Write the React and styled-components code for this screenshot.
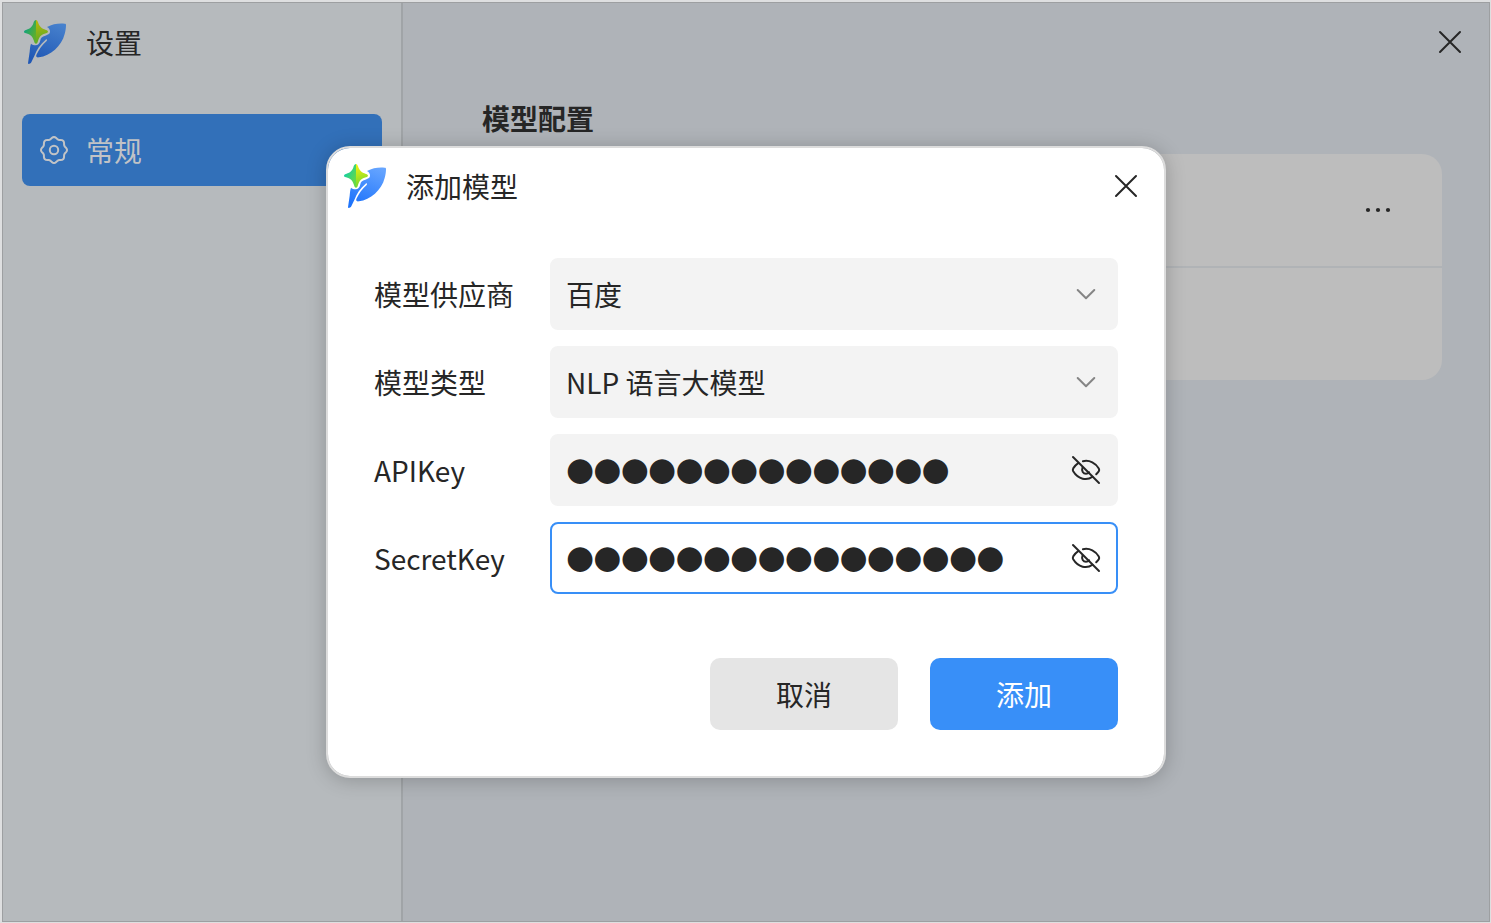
import React from "react";
import styled, { createGlobalStyle } from "styled-components";

const GlobalStyle = createGlobalStyle`
  *, *::before, *::after { box-sizing: border-box; }
  body { margin: 0; background: #dedfe0; overflow: hidden; }
  body, button {
    font-family: "Noto Sans CJK SC", "Noto Sans", sans-serif;
    font-size: 28px;
    line-height: 40px;
    color: #262626;
  }
`;

const Page = styled.div`
  width: 1491px;
  height: 923px;
  padding: 2px 1px 1px 2px;
`;

const Window = styled.div`
  display: flex;
  height: 920px;
  border: 1px solid #9d9fa1;
  background: #afb3b8;
`;

const Sidebar = styled.aside`
  flex: none;
  width: 400px;
  padding: 0 19px;
  border-right: 2px solid #a0a4a7;
  background: #b6babd;
`;

const Brand = styled.div`
  display: flex;
  align-items: center;
  gap: 20px;
  height: 79px;
  padding-left: 2px;
`;

const BrandName = styled.span`
  padding-bottom: 1px;
`;

const NavItem = styled.div`
  display: flex;
  align-items: center;
  gap: 18px;
  height: 72px;
  margin-top: 32px;
  padding-left: 18px;
  border-radius: 8px;
  background: #3270b9;
  color: #c1c3c6;
`;

const Content = styled.main`
  flex: 1;
  display: flex;
  flex-direction: column;
  padding: 0 47px 0 79px;
`;

const ContentBar = styled.div`
  display: flex;
  justify-content: flex-end;
  margin: 0 -20px;
  padding-top: 27px;
`;

const SectionTitle = styled.h2`
  margin: 44px 0 0;
  font-size: 28px;
  line-height: 40px;
  font-weight: 700;
`;

const Card = styled.section`
  margin-top: 16px;
  border-radius: 20px;
  background: #bdbdbd;
`;

const CardRow = styled.div`
  display: flex;
  align-items: center;
  justify-content: flex-end;
  height: ${(p) => (p.$divided ? 114 : 112)}px;
  padding-right: 51px;
  border-bottom: ${(p) => (p.$divided ? "2px solid #b0b3b6" : "none")};
`;

const IconButton = styled.button`
  display: flex;
  padding: 0;
  border: 0;
  background: none;
`;

const Dialog = styled.form`
  position: absolute;
  left: 326px;
  top: 146px;
  width: 840px;
  height: 632px;
  padding: 0 46px;
  border: 2px solid #dcdcdc;
  border-radius: 24px;
  background: #fff;
  background-clip: padding-box;
  box-shadow: 0 2px 20px rgba(0, 0, 0, 0.22);
`;

const DialogHeader = styled.header`
  display: flex;
  align-items: center;
  gap: 20px;
  height: 76px;
  margin: 0 -20px 0 -30px;
`;

const DialogTitle = styled.span`
  flex: 1;
`;

const Fields = styled.div`
  display: grid;
  gap: 16px;
  margin-top: 34px;
`;

const Field = styled.div`
  display: grid;
  grid-template-columns: 176px 568px;
  align-items: center;
`;

const Label = styled.label`
  display: block;
`;

const Control = styled.div`
  display: flex;
  align-items: center;
  justify-content: space-between;
  height: 72px;
  padding: 0 ${(p) => (p.$secret ? 15 : 19)}px 0 14px;
  border: 2px solid ${(p) => (p.$focused ? "#388ff7" : "#f3f3f3")};
  border-radius: 8px;
  background: ${(p) => (p.$focused ? "#fff" : "#f3f3f3")};
`;

const Mask = styled.span`
  padding-bottom: 2px;
  font-family: "DejaVu Sans", sans-serif;
  font-size: 32.3px;
  line-height: 40px;
  letter-spacing: -0.83px;
`;

const Actions = styled.footer`
  display: flex;
  justify-content: flex-end;
  gap: 32px;
  margin-top: 64px;
`;

const ActionButton = styled.button`
  width: 188px;
  height: 72px;
  padding: 0;
  border: 0;
  border-radius: 10px;
  background: ${(p) => (p.$primary ? "#388ff8" : "#e5e5e5")};
  color: ${(p) => (p.$primary ? "#fff" : "#262626")};
`;

function Logo({ id, dim }) {
  const c = dim
    ? ["#4781cd", "#2058b5", "#10a37e", "#5cae2e", "#b5b60a", "#66ad22"]
    : ["#66a5ff", "#1f74fb", "#16cfa5", "#62d94a", "#eef010", "#80dc2a"];
  return (
    <svg width="42" height="45" viewBox="72 72 126 135" fill="none">
      <defs>
        <linearGradient id={id + "leaf"} x1="170" y1="80" x2="120" y2="200" gradientUnits="userSpaceOnUse">
          <stop stopColor={c[0]} />
          <stop offset="1" stopColor={c[1]} />
        </linearGradient>
        <linearGradient id={id + "left"} x1="74" y1="100" x2="107" y2="115" gradientUnits="userSpaceOnUse">
          <stop stopColor={c[2]} />
          <stop offset="1" stopColor={c[3]} />
        </linearGradient>
        <linearGradient id={id + "right"} x1="112" y1="78" x2="125" y2="130" gradientUnits="userSpaceOnUse">
          <stop stopColor={c[4]} />
          <stop offset="1" stopColor={c[5]} />
        </linearGradient>
      </defs>
      <path fill={`url(#${id}leaf)`} d="M194 83C176 81 158 84 141 93C148 97 151 103 150 109C149 114 143 117 136 119C126 122 122 126 121 133C119 143 114 148 107 148C101 148 97 146 93 143C90 151 90 159 89 167L84 202C84 206 91 204 94 199L104 178C110 161 120 146 137 131C140 128 143 132 140 135C127 146 117 160 109 177C107 183 111 185 117 184C151 180 185 150 194 114C197 104 198 95 198 87C198 84 197 83 194 83Z" />
      <path fill={`url(#${id}left)`} d="M108 72C105 72 102 75 101 79C98 91 92 98 78 102C70 104 70 110 78 112C91 115 98 122 102 135C103 140 105 143 108 143Z" />
      <path fill={`url(#${id}right)`} d="M108 72C111 72 113 75 114 79C118 91 124 98 138 102C146 104 146 110 138 112C125 115 118 122 114 135C113 140 111 143 108 143Z" />
    </svg>
  );
}

function CloseIcon() {
  return (
    <svg width="24" height="24" viewBox="0 0 24 24" stroke="#262626" strokeWidth="2" strokeLinecap="round">
      <path d="M2 2 22 22M22 2 2 22" />
    </svg>
  );
}

const gearOutline =
  Array.from({ length: 64 }, (_, i) => {
    const a = (i / 64) * Math.PI * 2;
    const r = 12.1 + 0.95 * Math.cos(8 * a);
    return `${i ? "L" : "M"}${(14 + r * Math.sin(a)).toFixed(2)} ${(14 - r * Math.cos(a)).toFixed(2)}`;
  }).join("") + "Z";

function GearIcon() {
  return (
    <svg width="28" height="28" viewBox="0 0 28 28" fill="none" stroke="currentColor" strokeWidth="2" strokeLinejoin="round">
      <path d={gearOutline} />
      <circle cx="14" cy="14" r="4.2" />
    </svg>
  );
}

function ChevronIcon() {
  return (
    <svg width="22" height="12" viewBox="0 0 22 12" fill="none" stroke="#858585" strokeWidth="2" strokeLinecap="round" strokeLinejoin="round">
      <path d="M2.7 2 11 10.2 19.3 2" />
    </svg>
  );
}

function EyeOffIcon() {
  return (
    <svg width="30" height="30" viewBox="0 0 30 30" fill="none" stroke="#262626" strokeWidth="2" strokeLinecap="round" strokeLinejoin="round">
      <path d="M2 2 28 28" />
      <path d="M11.9 6.2C18.8 4.6 24.8 8.4 27.8 13.4Q28.6 14.8 27.8 16.2C27 17.6 26 18.4 25.2 19.2" />
      <path d="M7.2 8.2C5 9.7 3.4 11.7 2.2 13.4Q1.4 14.8 2.2 16.2C7.3 24.5 15.8 26 21.5 21.8" />
      <path d="M11.5 12.6C10.2 16 12.2 18.7 15 18.7C16.3 18.7 17.4 18.2 18.1 17.3" />
    </svg>
  );
}

function MoreIcon() {
  return (
    <svg width="26" height="6" viewBox="0 0 26 6" fill="#262626">
      <circle cx="3" cy="3" r="2.1" />
      <circle cx="13" cy="3" r="2.1" />
      <circle cx="23" cy="3" r="2.1" />
    </svg>
  );
}

export default function App() {
  return (
    <Page>
      <GlobalStyle />
      <Window>
        <Sidebar>
          <Brand>
            <Logo id="side" dim />
            <BrandName>设置</BrandName>
          </Brand>
          <NavItem>
            <GearIcon />
            <span>常规</span>
          </NavItem>
        </Sidebar>
        <Content>
          <ContentBar>
            <IconButton type="button" aria-label="关闭"><CloseIcon /></IconButton>
          </ContentBar>
          <SectionTitle>模型配置</SectionTitle>
          <Card>
            <CardRow $divided><MoreIcon /></CardRow>
            <CardRow />
          </Card>
        </Content>
      </Window>
      <Dialog>
        <DialogHeader>
          <Logo id="dialog" />
          <DialogTitle>添加模型</DialogTitle>
          <IconButton type="button" aria-label="关闭"><CloseIcon /></IconButton>
        </DialogHeader>
        <Fields>
          <Field>
            <Label>模型供应商</Label>
            <Control><span>百度</span><ChevronIcon /></Control>
          </Field>
          <Field>
            <Label>模型类型</Label>
            <Control><span>NLP 语言大模型</span><ChevronIcon /></Control>
          </Field>
          <Field>
            <Label>APIKey</Label>
            <Control $secret><Mask>{"●".repeat(14)}</Mask><EyeOffIcon /></Control>
          </Field>
          <Field>
            <Label>SecretKey</Label>
            <Control $secret $focused><Mask>{"●".repeat(16)}</Mask><EyeOffIcon /></Control>
          </Field>
        </Fields>
        <Actions>
          <ActionButton type="button">取消</ActionButton>
          <ActionButton type="button" $primary>添加</ActionButton>
        </Actions>
      </Dialog>
    </Page>
  );
}
